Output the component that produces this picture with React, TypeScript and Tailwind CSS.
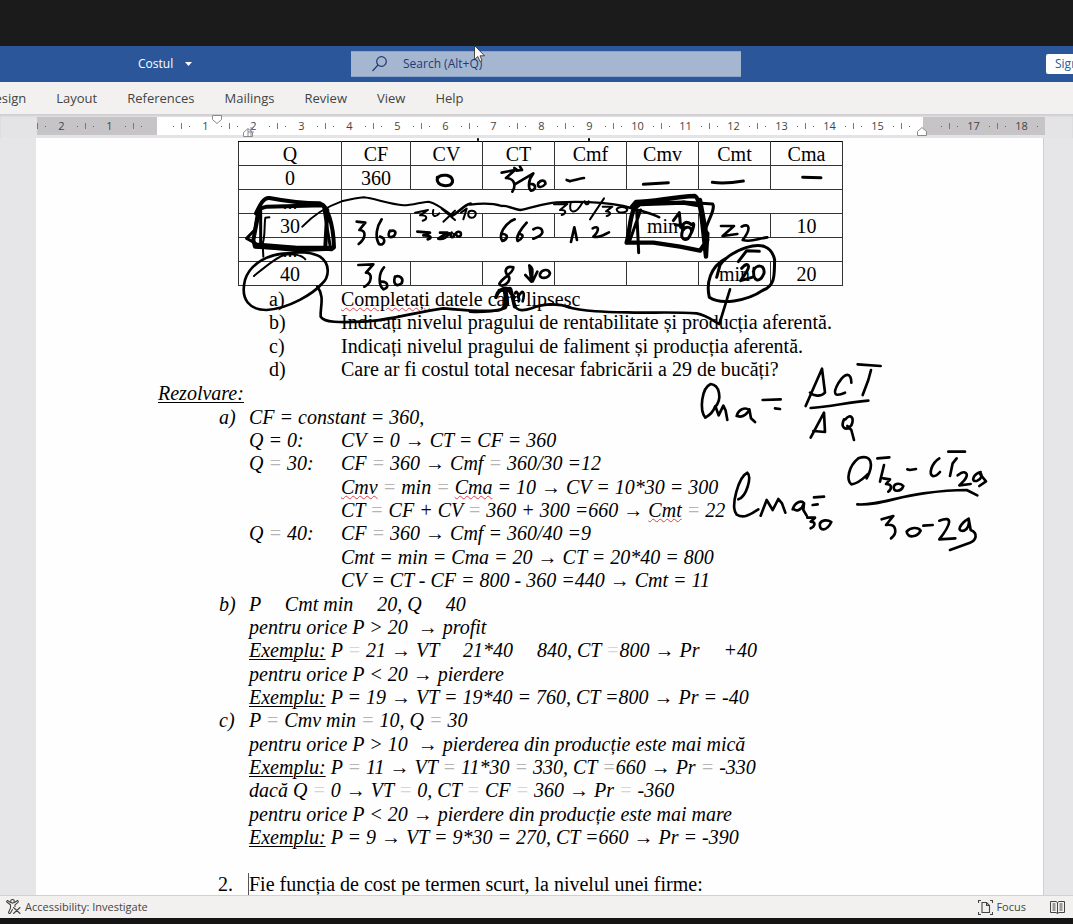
import React from "react";

const SERIF = "font-['Liberation_Serif',serif]";
const SANS = "font-['Open_Sans','Noto_Sans',sans-serif]";

const tabs = ["Design", "Layout", "References", "Mailings", "Review", "View", "Help"];

const rulerCells: { label: string; tone: string }[] = [
  { label: "2", tone: "bg-[#c6c4c6]" },
  { label: "1", tone: "bg-[#c6c4c6]" },
  { label: "", tone: "bg-linear-to-r from-[#c6c4c6] from-50% to-white to-50%" },
  ...Array.from({ length: 15 }, (_, i) => ({ label: String(i + 1), tone: "bg-white" })),
  { label: "", tone: "bg-linear-to-r from-white from-45% to-[#c6c4c6] to-45%" },
  { label: "17", tone: "bg-[#c6c4c6]" },
  { label: "18", tone: "bg-[#c6c4c6]" },
];

function Ruler() {
  return (
    <div className="relative flex h-6 shrink-0 bg-[#e4e4e6] pt-[3px] pr-7 pb-[3px] pl-[37px] shadow-[inset_0_2px_2px_#cfcdd0]">
      {rulerCells.map((cell, i) => (
        <div
          key={i}
          className={`flex min-w-0 flex-1 items-center justify-between text-[11px] leading-[18px] text-[#444] ${cell.tone}`}
        >
          <span className="h-[6px] w-px bg-[#777]" />
          <span className="size-px bg-[#666]" />
          <span className="w-4 text-center">{cell.label}</span>
          <span className="size-px bg-[#666]" />
          <span />
        </div>
      ))}
      <svg className="pointer-events-none absolute inset-0 h-full w-full overflow-visible" fill="#fff" stroke="#8a8a8a">
        <path d="M212.500 1.500h9v4l-4.500 4l-4.500 -4z" />
        <path d="M243.500 22.500v-4l4.500 -4l4.500 4v4zM248 15v8M251 13v9M248 18h6" />
        <path d="M917.500 21.500v-4l4.500 -4l4.500 4v4z" />
      </svg>
    </div>
  );
}

/* Equals signs in progressively lighter greys. */
const Eq = () => <span className="text-[#b5b5b5]">=</span>;
const FaintEq = () => <span className="text-[#d6d6d6]">=</span>;
/* Blank as wide as an operator. */
const Gap = () => <span className="inline-block w-[14px]" />;
const Typo = ({ children }: { children: React.ReactNode }) => (
  <span className="underline decoration-[#e0404a] decoration-wavy decoration-1 underline-offset-1">{children}</span>
);
const Example = () => <u className="decoration-1 underline-offset-2">Exemplu:</u>;

function Question({ mark, children }: { mark: string; children: React.ReactNode }) {
  return (
    <li className="flex">
      <span className="w-[72px] shrink-0">{mark}</span>
      <span>{children}</span>
    </li>
  );
}

function Row({ mark = "", head, children }: { mark?: string; head?: React.ReactNode; children: React.ReactNode }) {
  return (
    <p className="flex whitespace-pre">
      <span className="w-[30px] shrink-0">{mark}</span>
      {head !== undefined && <span className="w-[92px] shrink-0">{head}</span>}
      <span>{children}</span>
    </p>
  );
}

const columns = ["Q", "CF", "CV", "CT", "Cmf", "Cmv", "Cmt", "Cma"];
const rows: string[][] = [
  ["0", "360", "", "", "", "", "", ""],
  ["..."],
  ["30", "", "", "", "", "min", "", "10"],
  ["..."],
  ["40", "", "", "", "", "", "min", "20"],
];

function CostTable() {
  return (
    <table className="ml-[202px] w-[605px] table-fixed border-collapse text-center leading-[21px]">
      <colgroup>
        <col className="w-[103px]" />
        <col className="w-[69px]" />
        <col span={6} className="w-[72px]" />
      </colgroup>
      <thead>
        <tr className="h-6">
          {columns.map((c) => (
            <th key={c} className="border border-[#333] border-t-black p-0 pt-[2px] font-normal">
              {c}
            </th>
          ))}
        </tr>
      </thead>
      <tbody>
        {rows.map((r, i) => (
          <tr key={i} className="h-6">
            {r.map((c, j) => (
              <td key={j} className="border border-[#333] p-0 pt-[2px]">
                {c}
              </td>
            ))}
            {r.length === 1 && <td colSpan={7} className="border border-[#333] p-0" />}
          </tr>
        ))}
      </tbody>
    </table>
  );
}

function Ink() {
  return (
    <svg
      aria-hidden="true"
      className="pointer-events-none absolute top-0 left-0 h-full w-full"
      fill="none"
      stroke="#000"
      strokeLinecap="round"
      strokeLinejoin="round"
    >
      {/* left part of the table */}
      <g transform="translate(230 130) scale(.33333)" strokeWidth="8">
        <path strokeWidth="9" d="M622 142C618 165 640 170 660 165C674 155 668 140 650 136C635 134 625 138 622 147" />
        <path d="M380 275L406 278L388 300C410 300 408 325 386 342M455 268C440 290 434 320 447 342C462 350 472 325 450 320M480 302C470 320 480 325 492 318C502 305 492 298 478 305" />
        <path d="M385 405L430 403L408 428C430 428 425 460 403 470M462 412C445 430 445 465 460 478C478 475 475 455 455 455M495 440C488 462 500 472 515 460C522 445 510 435 495 440" />
        <path d="M562 305L600 308L580 316C604 315 608 325 593 328M630 308L652 308L625 326C640 330 655 318 658 310M665 308C655 325 675 325 672 312M678 310C678 325 698 322 692 308C688 304 680 304 678 310" />
        <path strokeWidth="6" d="M555 248L594 240L570 256C595 255 592 268 578 272M610 240C605 258 615 265 628 250M635 236L675 270M675 242L640 275M693 248L710 236L700 268M715 250C712 268 735 268 738 250C732 238 715 242 715 250" />
        <path strokeWidth="6" d="M217 290C245 260 290 230 335 214C360 208 385 203 402 202C430 205 480 222 520 226C550 226 575 215 596 215C625 222 650 245 665 255" />
        <path d="M665 258C690 245 700 225 722 221" />
        <path strokeWidth="12" d="M78 250C90 225 100 202 118 204C160 212 220 220 270 220C292 228 310 280 312 352L304 358C250 352 180 356 75 350L70 330C78 290 85 250 90 236L110 230L280 226L292 240L286 350" />
        <path strokeWidth="9" d="M50 325L74 300L84 240M50 325L80 342L200 352L308 352M80 350L205 362L300 358M92 235L92 340M280 225L300 345" />
        <path strokeWidth="6" d="M118 262L106 263C102 290 106 320 98 340L100 380" />
        <path strokeWidth="6" d="M72 438C100 415 140 380 165 374C190 370 215 375 226 388" />
        <path strokeWidth="8" d="M180 370C120 368 60 400 45 450C30 510 60 540 110 540C180 535 250 490 275 462C300 440 300 400 270 380C245 365 200 365 180 370" />
        <path strokeWidth="8" d="M262 470C285 500 270 530 272 560C280 578 330 578 400 575C480 572 560 545 640 535C700 540 770 548 810 540C830 532 826 505 822 480" />
      </g>
      {/* middle columns */}
      <g transform="translate(470 160) scale(.33333)" strokeWidth="8">
        <path d="M95 38L135 30L108 54C136 56 138 78 127 95M133 24L139 28M150 20L156 30L140 32M133 74L190 40C174 60 174 85 183 92C200 90 200 70 178 72M205 68C200 84 215 85 226 72C228 60 212 58 205 70" />
        <path d="M290 60L300 64C315 60 330 55 342 54" />
        <path d="M134 178C104 190 84 225 97 243C110 240 118 225 100 222M170 188C146 215 138 235 143 243C155 238 165 225 150 222M190 208C205 198 218 205 217 218C212 230 200 232 190 236" />
        <path d="M303 246L313 202L321 240M368 205C387 195 390 210 370 230C385 235 400 225 417 217" />
        <path strokeWidth="6" d="M252 133L292 132L270 150C290 148 290 160 275 165M302 130C294 158 315 168 337 128M344 124C346 138 358 134 356 124M402 115L360 178M398 140L427 140L408 154C426 155 422 165 410 168M440 148C440 162 472 160 472 148C465 138 445 140 440 148" />
        <path strokeWidth="7" d="M0 134C30 130 70 130 95 138C115 136 130 148 150 150C190 142 220 130 260 127C320 124 400 126 460 138C500 148 540 158 568 172" />
        <path strokeWidth="8" d="M130 322C108 315 100 335 115 348C128 362 95 388 88 372C93 355 132 340 130 322M166 345L184 365L178 316C195 325 182 345 188 364L202 335M210 342C206 358 236 358 240 340C236 325 215 328 210 342" />
        <path strokeWidth="11" d="M78 412C85 385 112 378 120 395L132 412M88 392L120 386M105 388C112 400 108 415 112 432M122 388L134 440" />
        <path strokeWidth="8" d="M0 455C40 458 85 452 106 444C114 436 110 420 110 410M134 435C140 456 165 452 185 445C215 432 260 428 300 442M135 400C142 385 148 412 146 424M144 412C158 384 166 396 158 424" />
        <path strokeWidth="8" d="M290 440C350 458 440 456 510 458C570 458 620 456 680 460C710 465 735 486 748 492L780 388" />
      </g>
      {/* right columns */}
      <g transform="translate(620 190) scale(.33333)" strokeWidth="7">
        <path strokeWidth="13" d="M36 50L48 36C100 36 160 20 225 18C244 30 246 100 258 200M20 158C30 120 28 90 42 55L60 42L190 38L240 46M20 158L100 158L180 170L240 182L262 150L252 95L240 30M262 130L258 200" />
        <path strokeWidth="9" d="M190 36L278 42C288 55 262 95 256 120M50 60L56 188M30 150L62 60" />
        <path strokeWidth="9" d="M160 92L178 68L182 112M166 104L190 108M188 122C180 100 200 90 214 104C228 90 220 120 208 140C198 158 178 146 188 122C198 104 218 112 214 128" />
        <path strokeWidth="8" d="M303 108L342 108L308 138L352 132M365 110C388 98 395 115 368 150C395 158 410 146 442 142" />
        <path strokeWidth="9" d="M318 205C270 230 258 280 268 322C300 345 380 335 430 300C468 285 462 250 464 210C455 165 420 160 380 172C340 185 318 200 300 225L290 262" />
        <path strokeWidth="9" d="M355 215L380 182L418 184M365 235C382 215 392 225 380 245L362 272L396 262M402 235C396 275 420 282 432 250C436 222 406 222 400 245" />
      </g>
      <g transform="translate(520 130) scale(.33333)" strokeWidth="9">
        <path d="M370 163L445 158M577 157C600 160 640 158 670 153M848 142L903 143" />
      </g>
      {/* marginal cost formulas */}
      <g transform="translate(690 350) scale(.33333)" strokeWidth="8">
        <path d="M75 172C98 145 88 105 62 102C34 115 28 180 46 203C60 195 72 180 76 168L86 196L100 167L107 182L112 210" />
        <path d="M140 198C145 178 165 170 178 180C165 200 152 202 142 198M178 178L183 205L195 216M218 150L272 148M255 175L270 177" />
        <path d="M347 168L396 56L405 128C392 142 370 138 360 128M484 98C484 66 465 68 446 98C426 132 434 142 465 128M503 43L572 48M543 60L535 90L518 135" />
        <path d="M362 174C420 170 480 156 535 152M362 263L402 188L405 246L370 243M466 208C482 188 494 205 484 226C468 244 450 234 462 208M472 228L484 240L492 270" />
        <path d="M145 448C170 440 186 380 172 368C146 380 120 470 140 494C165 508 185 490 205 478M212 497L230 450L248 480L265 447L276 460L286 488" />
        <path d="M308 478C315 455 335 450 342 460C335 480 320 485 312 478M342 460L340 480L350 497M372 442L402 440M368 465L383 463M352 503L375 503L362 515C380 515 374 530 362 535M390 520C386 545 410 545 424 516C412 508 395 510 390 520" />
        <path d="M530 385C552 345 546 310 505 325C475 350 468 390 484 403C505 402 520 385 534 372M562 325L598 322M582 345L570 395M580 385L600 388L588 402C608 402 605 418 595 425M612 408C606 428 634 426 640 408C632 398 616 400 612 408M652 358L660 360L678 357" />
        <path d="M748 325C724 340 716 372 728 378C738 380 745 372 750 366M775 305L825 305M800 325L788 340L780 378M803 376C825 358 840 370 822 392L808 406L842 402M872 366C850 372 840 398 862 392C876 385 878 375 870 368M870 372L888 394L868 408" />
        <path d="M502 463C560 468 620 440 700 430C760 422 800 420 830 420L862 436" />
        <path d="M575 508L610 498L588 525C622 520 622 550 603 565M650 545C652 566 682 562 692 542C684 530 660 532 650 545M700 527L728 525M748 512C790 496 784 522 748 568L796 565M836 506C812 520 796 546 822 542C836 536 838 520 836 506L842 540C866 550 858 572 840 578L780 600" />
      </g>
      {/* descenders of the line scrolled under the ruler */}
      <path strokeWidth="2" d="M478 139v1M589 139v1" />
    </svg>
  );
}

export default function App() {
  return (
    <div className={`relative flex h-screen flex-col overflow-hidden bg-[#e6e6e8] ${SANS}`}>
      <div className="h-[46px] shrink-0 bg-[#1b1b1b]" />

      <header className="flex h-9 shrink-0 items-center bg-[#2b579a] pl-[138px] text-[12px] text-white">
        <button type="button" className="flex w-[213px] items-center gap-3">
          Costul
          <svg width="7" height="4" viewBox="0 0 7 4" fill="currentColor">
            <path d="M0 0h7L3.500 4z" />
          </svg>
        </button>
        <label className="flex h-[26px] w-[390px] items-center gap-4 border-y border-[#8ba3c8] bg-[#a5b6d1] pl-[21px] text-[#1e3c72]">
          <svg width="15" height="16" viewBox="0 0 15 16" fill="none" stroke="currentColor" strokeWidth="1.200">
            <circle cx="9.500" cy="5.500" r="4.800" />
            <path d="M6 9L.5 15" />
          </svg>
          <input
            type="search"
            aria-label="Search"
            placeholder="Search (Alt+Q)"
            className="min-w-0 flex-1 bg-transparent outline-none placeholder:text-[#1e3c72] placeholder:opacity-100"
          />
        </label>
        <div className="min-w-0 flex-1" />
        <button type="button" className="-mr-10 h-5 w-[67px] shrink-0 rounded-xs bg-white pl-[9px] text-left leading-5 text-[#2b579a]">
          Sign in
        </button>
      </header>

      <nav className="flex h-8 shrink-0 items-center bg-[#f3f1f0] pt-px text-[13px] text-[#444]">
        <div className="-ml-[15px] flex gap-[30px]">
          {tabs.map((t) => (
            <button key={t} type="button">
              {t}
            </button>
          ))}
        </div>
      </nav>

      <Ruler />

      <main
        className={`mr-[29px] ml-9 min-h-0 flex-1 overflow-hidden border-r border-[#cfcfd2] bg-[#fefefe] pt-[3px] text-[20px] leading-[23px] text-black ${SERIF}`}
      >
        <CostTable />
        <div className="flex flex-col gap-px pt-[2px]">
          <ol className="pl-[233px]">
            <Question mark="a)">
              <Typo>Completați</Typo> datele care lipsesc
            </Question>
            <Question mark="b)">Indicați nivelul pragului de rentabilitate și producția aferentă.</Question>
          </ol>
          <ol className="pl-[233px]">
            <Question mark="c)">Indicați nivelul pragului de faliment și producția aferentă.</Question>
            <Question mark="d)">Care ar fi costul total necesar fabricării a 29 de bucăți?</Question>
          </ol>
          <div className="italic">
            <h2 className="pl-[122px] underline decoration-1 underline-offset-2">Rezolvare:</h2>
          </div>
          <div className="pl-[183px] italic">
            <Row mark="a)">CF = constant = 360,</Row>
            <Row head="Q = 0:">CV = 0 → CT = CF = 360</Row>
            <Row head={<>Q <Eq /> 30:</>}>CF <Eq /> 360 → Cmf <Eq /> 360/30 =12</Row>
          </div>
          <div className="pl-[183px] italic">
            <Row head=""><Typo>Cmv</Typo> <Eq /> min <Eq /> <Typo>Cma</Typo> = 10 → CV = 10*30 = 300</Row>
            <Row head="">CT <Eq /> CF + CV <Eq /> 360 + 300 =660 → <Typo>Cmt</Typo> <Eq /> 22</Row>
            <Row head={<>Q <Eq /> 40:</>}>CF <Eq /> 360 → Cmf = 360/40 =9</Row>
          </div>
          <div className="pl-[183px] italic">
            <Row head="">Cmt = min = Cma = 20 → CT = 20*40 = 800</Row>
            <Row head="">CV = CT - CF = 800 - 360 =440 → Cmt = 11</Row>
          </div>
          <div className="pl-[183px] italic">
            <Row mark="b)">P <Gap /> Cmt min <Gap /> 20, Q <Gap /> 40</Row>
            <Row>pentru orice P &gt; 20  → profit</Row>
            <Row><Example /> P <FaintEq /> 21 → VT <Gap /> 21*40 <Gap /> 840, CT <FaintEq />800 → Pr <Gap /> +40</Row>
          </div>
          <div className="pl-[183px] italic">
            <Row>pentru orice P &lt; 20 → pierdere</Row>
            <Row><Example /> P = 19 → VT = 19*40 = 760, CT =800 → Pr = -40</Row>
            <Row mark="c)">P <Eq /> Cmv min <Eq /> 10, Q <Eq /> 30</Row>
          </div>
          <div className="pl-[183px] italic">
            <Row>pentru orice P &gt; 10  → pierderea din producție este mai mică</Row>
            <Row><Example /> P <Eq /> 11 → VT <Eq /> 11*30 <Eq /> 330, CT <Eq />660 → Pr <Eq /> -330</Row>
            <Row>dacă Q <FaintEq /> 0 → VT <FaintEq /> 0, CT <FaintEq /> CF <FaintEq /> 360 → Pr <FaintEq /> -360</Row>
          </div>
          <div className="pl-[183px] italic">
            <Row>pentru orice P &lt; 20 → pierdere din producție este mai mare</Row>
            <Row><Example /> P = 9 → VT = 9*30 = 270, CT =660 → Pr = -390</Row>
          </div>
          <div className="pt-[23px] pl-[182px]">
            <p className="flex">
              <span className="w-[30px] shrink-0">2.</span>
              <span className="border-l border-[#555]">Fie funcția de cost pe termen scurt, la nivelul unei firme:</span>
            </p>
          </div>
        </div>
      </main>

      <footer className="flex h-[23px] shrink-0 items-center border-t border-[#d2d0d2] bg-[#f3f1f0] pr-2 pl-[6px] text-[11px] text-[#444]">
        <button type="button" className="flex items-center gap-1">
          <svg width="15" height="16" viewBox="0 0 15 16" fill="none" stroke="currentColor" strokeWidth="1.100" strokeLinecap="round" strokeLinejoin="round">
            <circle cx="6.500" cy="2.300" r="1.800" />
            <path d="M4.500 3.500L1.500 1.500Q.2 2.200 1 3.300L4.500 5.800V9L2.500 13.500Q3 15 4.300 14.300L6.500 10.500M8.500 3.500L11.500 1.500Q12.800 2.200 12 3.300L9 5.800V7.500M7.500 8.500L14 14.500M14 8.500L7.500 14.500" />
          </svg>
          Accessibility: Investigate
        </button>
        <div className="flex-1" />
        <button type="button" className="flex items-center gap-[3px]">
          <svg width="15" height="15" viewBox="0 0 15 15" fill="none" stroke="currentColor" strokeWidth="1.100">
            <path d="M.5 3V.5H3M12 .5h2.500V3M14.500 12v2.500H12M3 14.500H.5V12M4 2.500h4.500L11.500 5.500v7H4zM8.500 2.500v3h3" />
          </svg>
          Focus
        </button>
        <button type="button" aria-label="Read mode" className="ml-6">
          <svg width="15" height="14" viewBox="0 0 15 14" fill="none" stroke="currentColor">
            <path d="M.5 1.500H6L7.500 2.500L9 1.500h5.500v11H9L7.500 13.500L6 12.500H.5zM7.500 2.500v11M2.500 4h3M2.500 6h3M2.500 8h3M2.500 10h3M9.500 4h3M9.500 6h3M9.500 8h3M9.500 10h3" />
          </svg>
        </button>
      </footer>
      <div className="h-[6px] shrink-0 bg-[#151515]" />

      <Ink />
      <svg className="pointer-events-none absolute top-[45px] left-[474px]" width="12" height="18" viewBox="0 0 12 18" fill="#fff" stroke="#222" strokeWidth=".8">
        <path d="M.5 .5V14.500L3.800 11.500L6 16.500L8 15.500L6 10.800H10.500z" />
      </svg>
    </div>
  );
}
